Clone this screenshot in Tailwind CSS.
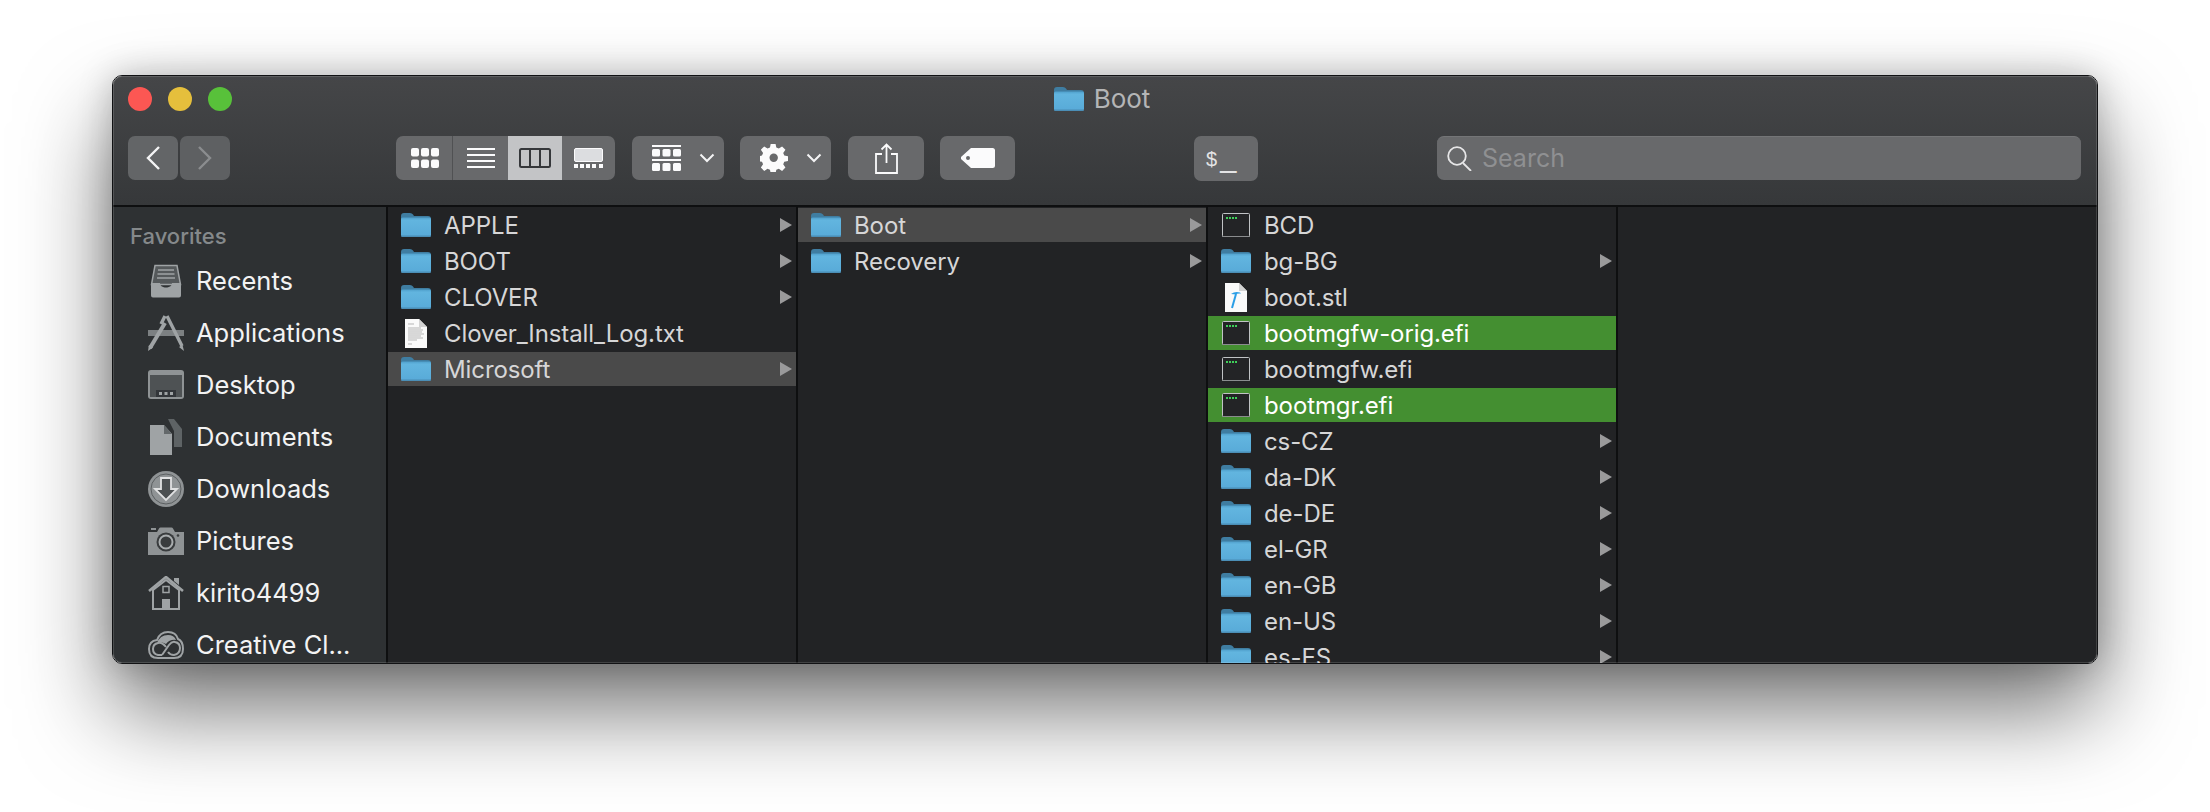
<!DOCTYPE html>
<html lang="en">
<head>
  <meta charset="UTF-8">
  <title>Boot</title>
  <script src="https://cdn.jsdelivr.net/npm/@tailwindcss/browser@4"></script>
</head>
<body class="bg-white w-[2210px] h-[812px] overflow-hidden font-['Inter',sans-serif]">

  <!-- Shared icons -->
  <svg class="absolute w-0 h-0">
    <defs>
      <linearGradient id="folderFill" x1="0" y1="0" x2="0" y2="1">
        <stop offset="0" stop-color="#4f9fcb"/>
        <stop offset="0.14" stop-color="#62b5df"/>
        <stop offset="1" stop-color="#58aad8"/>
      </linearGradient>
    </defs>
    <symbol id="folder" viewBox="0 0 30 24">
      <path d="M0 3q0-3 3-3h6q2 0 3 1.500l1 1.500h14q3 0 3 3v6H0z" fill="#3f7da1"/>
      <path d="M0 6q0-1.500 1.500-1.500h27q1.500 0 1.500 1.500v16q0 2-2 2H2q-2 0-2-2z" fill="url(#folderFill)"/>
      <path d="M0 22.500q0 1.500 2 1.500h26q2 0 2-1.500z" fill="#4b8eb6"/>
    </symbol>
    <symbol id="arrow" viewBox="0 0 12 14">
      <path d="M0 0l12 7-12 7z" fill="#9a9a9b"/>
    </symbol>
    <symbol id="term" viewBox="0 0 28 24">
      <rect x="0.500" y="0.500" width="27" height="23" rx="1" fill="#232426" stroke="#c0c3c5"/>
      <path d="M0 23.500h28" stroke="#8a8c8e"/>
      <path d="M4 5h2M7 5h2M10 5h2M13 5h2" stroke="#3fd05a" stroke-width="2"/>
    </symbol>
    <symbol id="chev" viewBox="0 0 16 10">
      <path d="M1.500 1.500l6.500 6.500 6.500-6.500" fill="none" stroke="#f4f4f5" stroke-width="2"/>
    </symbol>
  </svg>

  <div class="pt-[75px] pl-[112px]">
    <!-- Window -->
    <div class="relative w-[1986px] h-[589px] flex flex-col rounded-[10px] border border-[#111214] overflow-hidden shadow-[0_46px_90px_rgba(0,0,0,0.55),0_0_34px_rgba(0,0,0,0.22)] after:absolute after:inset-0 after:rounded-[9px] after:pointer-events-none after:shadow-[inset_0_0_0_1px_rgba(255,255,255,0.14)]">

      <!-- Toolbar -->
      <div class="h-[131px] shrink-0 border-b-2 border-[#0e0f10] bg-gradient-to-b from-[#454648] to-[#36383a]">
        <div class="h-[45px] grid grid-cols-[1fr_auto_1fr] items-center pl-[15px] pr-[21px]">
          <div class="flex gap-[16px]">
            <span class="w-[24px] h-[24px] rounded-full bg-[#fc5753]"></span>
            <span class="w-[24px] h-[24px] rounded-full bg-[#e5bf3c]"></span>
            <span class="w-[24px] h-[24px] rounded-full bg-[#58c13a]"></span>
          </div>
          <div class="flex items-center gap-[10px]">
            <svg class="w-[30px] h-[24px]"><use href="#folder"/></svg>
            <span class="text-[26px] text-[#b4b5b6]">Boot</span>
          </div>
          <div></div>
        </div>

        <div class="flex items-start pt-[15px] pl-[15px]">
          <!-- Back / forward -->
          <div class="w-[50px] h-[44px] rounded-[7px] bg-[#636567] flex items-center justify-center mr-[2px]">
            <svg class="w-[14px] h-[24px]" viewBox="0 0 14 24"><path d="M13 1L2 12l11 11" fill="none" stroke="#f4f4f5" stroke-width="2.400"/></svg>
          </div>
          <div class="w-[50px] h-[44px] rounded-[7px] bg-[#5e6062] flex items-center justify-center">
            <svg class="w-[14px] h-[24px]" viewBox="0 0 14 24"><path d="M1 1l11 11L1 23" fill="none" stroke="#8b8d8f" stroke-width="2.400"/></svg>
          </div>

          <!-- View switcher -->
          <div class="ml-[166px] w-[219px] h-[44px] rounded-[7px] bg-[#68696b] overflow-hidden flex">
            <div class="w-[57px] pl-[2px] border-r border-[#505153] flex items-center justify-center">
              <svg class="w-[28px] h-[20px]" viewBox="0 0 28 20" fill="#fbfbfc">
                <rect width="8" height="8.500" rx="2"/><rect x="10" width="8" height="8.500" rx="2"/><rect x="20" width="8" height="8.500" rx="2"/>
                <rect y="11.500" width="8" height="8.500" rx="2"/><rect x="10" y="11.500" width="8" height="8.500" rx="2"/><rect x="20" y="11.500" width="8" height="8.500" rx="2"/>
              </svg>
            </div>
            <div class="w-[55px] flex items-center justify-center">
              <svg class="w-[28px] h-[20px]" viewBox="0 0 28 20" fill="#fbfbfc">
                <rect width="28" height="2"/><rect y="6" width="28" height="2"/><rect y="12" width="28" height="2"/><rect y="18" width="28" height="2"/>
              </svg>
            </div>
            <div class="w-[54px] bg-[#c3c4c6] flex items-center justify-center">
              <svg class="w-[32px] h-[20px]" viewBox="0 0 32 20" fill="none" stroke="#35373a" stroke-width="2">
                <rect x="1" y="1" width="30" height="18" rx="1.500"/><path d="M11 1v18M21 1v18"/>
              </svg>
            </div>
            <div class="w-[53px] flex items-center justify-center">
              <svg class="w-[29px] h-[20px]" viewBox="0 0 29 20">
                <rect x="0.500" y="0.500" width="28" height="13" rx="1.500" fill="#dcdde0" stroke="#fbfbfc"/>
                <path d="M0 16h4v4H0zM6 16h4v4H6zM12 16h4v4h-4zM18 16h4v4h-4zM25 16h4v4h-4z" fill="#fbfbfc"/>
              </svg>
            </div>
          </div>

          <!-- Group by -->
          <div class="ml-[17px] w-[92px] h-[44px] rounded-[7px] bg-[#68696b] flex items-center pl-[20px]">
            <svg class="w-[29px] h-[26px]" viewBox="0 0 29 26" fill="#fbfbfc">
              <rect width="29" height="2"/><rect y="4" width="8" height="7.500" rx="1.500"/><rect x="10.500" y="4" width="8" height="7.500" rx="1.500"/><rect x="21" y="4" width="8" height="7.500" rx="1.500"/>
              <rect y="14" width="29" height="2"/><rect y="18" width="8" height="8" rx="1.500"/><rect x="10.500" y="18" width="8" height="8" rx="1.500"/><rect x="21" y="18" width="8" height="8" rx="1.500"/>
            </svg>
            <svg class="w-[16px] h-[10px] ml-[18px]"><use href="#chev"/></svg>
          </div>

          <!-- Action -->
          <div class="ml-[16px] w-[91px] h-[44px] rounded-[7px] bg-[#68696b] flex items-center pl-[20px]">
            <svg class="w-[28px] h-[28px]" viewBox="0 0 28 28">
              <path d="M11.500 0h5l.8 4 2.600 1.100 3.400-2.300 3.500 3.500-2.300 3.400 1.100 2.600 4 .8v5l-4 .8-1.100 2.600 2.300 3.400-3.500 3.500-3.400-2.300-2.600 1.100-.8 4h-5l-.8-4-2.600-1.100-3.400 2.300-3.500-3.500 2.300-3.400-1.100-2.600-4-.8v-5l4-.8 1.100-2.600-2.300-3.400 3.500-3.500 3.400 2.300 2.600-1.100z" transform="translate(-.3 -.3) scale(.96)" fill="#fbfbfc"/>
              <circle cx="13.700" cy="13.700" r="4.200" fill="#68696b"/>
            </svg>
            <svg class="w-[16px] h-[10px] ml-[18px]"><use href="#chev"/></svg>
          </div>

          <!-- Share -->
          <div class="ml-[17px] w-[76px] h-[44px] rounded-[7px] bg-[#68696b] flex items-center justify-center">
            <svg class="w-[23px] h-[31px]" viewBox="0 0 23 31" fill="none" stroke="#fbfbfc" stroke-width="1.800">
              <path d="M7 11H1v19h21V11h-6"/><path d="M11.500 20V1.500M6.500 6.500l5-5 5 5"/>
            </svg>
          </div>

          <!-- Tags -->
          <div class="ml-[16px] w-[75px] h-[44px] rounded-[7px] bg-[#68696b] flex items-center justify-center">
            <svg class="w-[34px] h-[20px]" viewBox="0 0 34 20">
              <path fill-rule="evenodd" d="M10 0h21.500q2.500 0 2.500 2.500v15q0 2.500-2.500 2.500H10L0 11V9zM7 8a2 2 0 1 0 0 4 2 2 0 0 0 0-4z" fill="#fbfbfc"/>
            </svg>
          </div>

          <!-- Terminal -->
          <div class="ml-[179px] w-[64px] h-[45px] rounded-[7px] bg-[#68696b] flex items-center pl-[12px] gap-[3px] font-['Liberation_Sans',sans-serif] text-[#e4e4e5]">
            <span class="text-[20px] font-light">$</span>
            <span class="text-[29px] leading-none font-light mb-[3px]">_</span>
          </div>

          <!-- Search -->
          <div class="ml-[179px] w-[644px] h-[44px] rounded-[7px] bg-[#68696b] border-t border-[#747577] flex items-center pl-[10px] gap-[10px]">
            <svg class="w-[25px] h-[25px]" viewBox="0 0 25 25" fill="none" stroke="#e6e6e7" stroke-width="1.800">
              <circle cx="10" cy="10" r="8.800"/><path d="M16 17l8 8"/>
            </svg>
            <span class="text-[25px] pt-[1px] text-[#8f9092]">Search</span>
          </div>
        </div>
      </div>

      <!-- Browser -->
      <div class="flex-1 min-h-0 flex">

        <!-- Sidebar -->
        <div class="w-[275px] shrink-0 bg-[#2e3133] border-r-2 border-[#0e0f10] text-[25.500px] text-[#f3f3f3]">
          <div class="h-[48px] flex items-center pt-[11px] pl-[17px] text-[22px] font-medium text-[#85898b]">Favorites</div>

          <div class="h-[52px] flex items-center pl-[35px] gap-[12px]">
            <svg class="w-[36px] h-[36px] shrink-0" viewBox="0 0 36 36">
              <path d="M7 2.500h22l3.500 19h-29z" fill="#55595b" stroke="#9fa3a5" stroke-width="1.500"/>
              <path d="M10 7h16M9.500 11h17M9 15h18" stroke="#9fa3a5" stroke-width="1.600"/>
              <path d="M3 20h9c0 3 3 4.500 6 4.500s6-1.500 6-4.500h9v12.500q0 2-2 2H5q-2 0-2-2z" fill="#9fa3a5"/>
            </svg>
            <span>Recents</span>
          </div>

          <div class="h-[52px] flex items-center pl-[35px] gap-[12px]">
            <svg class="w-[36px] h-[36px] shrink-0" viewBox="0 0 36 36">
              <path d="M0 15h36v6H0z" fill="#7c8082"/>
              <path d="M17 1l-4 8M19 1l15 30" stroke="#9fa3a5" stroke-width="3.400" fill="none"/>
              <path d="M17 8L2 33" stroke="#9fa3a5" stroke-width="4" fill="none"/>
              <path d="M0 36l1-6 4 2.500z" fill="#9fa3a5"/>
              <path d="M36 36l-5-4 3.500-2z" fill="#9fa3a5"/>
            </svg>
            <span>Applications</span>
          </div>

          <div class="h-[52px] flex items-center pl-[35px] gap-[12px]">
            <svg class="w-[36px] h-[30px] shrink-0" viewBox="0 0 36 30">
              <rect width="36" height="29" rx="3" fill="#8f9395"/>
              <rect x="2" y="5" width="32" height="22" fill="#4e5254"/>
              <path d="M8 20h20v7H8z" fill="#33363a"/>
              <path d="M11 22h3v3h-3zM16.500 22h3v3h-3zM22 22h3v3h-3z" fill="#9fa3a5"/>
            </svg>
            <span>Desktop</span>
          </div>

          <div class="h-[52px] flex items-center pl-[35px] gap-[12px]">
            <svg class="w-[36px] h-[36px] shrink-0" viewBox="0 0 36 36">
              <path d="M20 0h6l8 10v18h-8V12z" fill="#5e6365"/>
              <path d="M2 6h14l8 9v21H2z" fill="#9fa3a5"/>
              <path d="M16 6v9h8z" fill="#63686a"/>
            </svg>
            <span>Documents</span>
          </div>

          <div class="h-[52px] flex items-center pl-[35px] gap-[12px]">
            <svg class="w-[36px] h-[36px] shrink-0" viewBox="0 0 36 36">
              <circle cx="18" cy="18" r="18" fill="#8f9395"/>
              <circle cx="18" cy="18" r="15" fill="none" stroke="#5b5f61" stroke-width="1"/>
              <path d="M13 7h10v11h6L18 29 7 18h6z" fill="#4c5052" stroke="#e0e1e2" stroke-width="1.800"/>
            </svg>
            <span>Downloads</span>
          </div>

          <div class="h-[52px] flex items-center pl-[35px] gap-[12px]">
            <svg class="w-[36px] h-[28px] shrink-0" viewBox="0 0 36 28">
              <path d="M0 5h9l2-3.500q.5-1 1.500-1h11q1 0 1.500 1L27 5h9v23H0z" fill="#8f9395"/>
              <path d="M3 1h5v2H3z" fill="#8f9395"/>
              <circle cx="18" cy="15" r="9.500" fill="#393c3e"/>
              <circle cx="18" cy="15" r="6.500" fill="none" stroke="#a9adaf" stroke-width="2"/>
              <circle cx="30" cy="8.500" r="1.300" fill="#393c3e"/>
            </svg>
            <span>Pictures</span>
          </div>

          <div class="h-[52px] flex items-center pl-[35px] gap-[12px]">
            <svg class="w-[36px] h-[34px] shrink-0" viewBox="0 0 36 34">
              <path d="M26 2h5v7l-5-4z" fill="#9fa3a5"/>
              <path d="M1 15L18 1l17 14" fill="none" stroke="#9fa3a5" stroke-width="2.600"/>
              <path d="M5 14v19h26V14L18 4z" fill="none" stroke="#9fa3a5" stroke-width="2"/>
              <path d="M14 23h8v10h-8z" fill="#9fa3a5"/>
              <path d="M15 10.500h6v6h-6z" fill="none" stroke="#9fa3a5" stroke-width="1.500"/>
            </svg>
            <span>kirito4499</span>
          </div>

          <div class="h-[52px] flex items-center pl-[35px] gap-[12px]">
            <svg class="w-[36px] h-[28px] shrink-0" viewBox="0 0 36 28" fill="none" stroke="#9fa3a5" stroke-width="2">
              <path d="M10 27Q1 27 1 18Q1 10 9 9Q12 1 20 1Q28 1 30 8Q35 10 35 18Q35 27 26 27z"/>
              <path d="M9 12Q12 4 20 4Q26 4 28 9Q22 8 18 13Q13 10 9 12z" fill="#9fa3a5" stroke="none"/>
              <path d="M14 24L21 14Q24 10 27 11Q32 12 32 17Q32 23 26 24Q22 24 20 21"/>
              <path d="M18 16Q14 11 10 12Q5 13 5 18Q5 23 10 24L14 24"/>
            </svg>
            <span>Creative Cl...</span>
          </div>
        </div>

        <!-- Column 1 -->
        <div class="w-[410px] shrink-0 bg-[#222325] border-r-2 border-[#0e0f10] pt-[1px] text-[24px] tracking-[-0.1px] text-[#d6d6d7] [&_span]:pt-[2px]">
          <div class="h-[34px] mb-[2px] flex items-center pl-[13px] pr-[4px]">
            <svg class="w-[30px] h-[24px]"><use href="#folder"/></svg><span class="ml-[13px] flex-1">APPLE</span><svg class="w-[12px] h-[14px]"><use href="#arrow"/></svg>
          </div>
          <div class="h-[34px] mb-[2px] flex items-center pl-[13px] pr-[4px]">
            <svg class="w-[30px] h-[24px]"><use href="#folder"/></svg><span class="ml-[13px] flex-1">BOOT</span><svg class="w-[12px] h-[14px]"><use href="#arrow"/></svg>
          </div>
          <div class="h-[34px] mb-[2px] flex items-center pl-[13px] pr-[4px]">
            <svg class="w-[30px] h-[24px]"><use href="#folder"/></svg><span class="ml-[13px] flex-1">CLOVER</span><svg class="w-[12px] h-[14px]"><use href="#arrow"/></svg>
          </div>
          <div class="h-[34px] mb-[2px] flex items-center pl-[17px] pr-[4px]">
            <svg class="w-[22px] h-[29px]" viewBox="0 0 22 29">
              <path d="M0 0h14l8 8v21H0z" fill="#fafafa"/>
              <path d="M14 0v8h8z" fill="#d3d3d3"/>
              <path d="M3 5h6M3 9h13M3 11h15M3 13h14M3 15h16M3 17h13M3 19h15M3 21h9M3 25h4" stroke="#b5b5b5" stroke-width="1"/>
            </svg>
            <span class="ml-[17px] flex-1">Clover_Install_Log.txt</span>
          </div>
          <div class="h-[34px] mb-[2px] flex items-center pl-[13px] pr-[4px] bg-[#4a4a4a]">
            <svg class="w-[30px] h-[24px]"><use href="#folder"/></svg><span class="ml-[13px] flex-1">Microsoft</span><svg class="w-[12px] h-[14px]"><use href="#arrow"/></svg>
          </div>
        </div>

        <!-- Column 2 -->
        <div class="w-[410px] shrink-0 bg-[#222325] border-r-2 border-[#0e0f10] pt-[1px] text-[24px] tracking-[-0.1px] text-[#d6d6d7] [&_span]:pt-[2px]">
          <div class="h-[34px] mb-[2px] flex items-center pl-[13px] pr-[4px] bg-[#4a4a4a]">
            <svg class="w-[30px] h-[24px]"><use href="#folder"/></svg><span class="ml-[13px] flex-1">Boot</span><svg class="w-[12px] h-[14px]"><use href="#arrow"/></svg>
          </div>
          <div class="h-[34px] mb-[2px] flex items-center pl-[13px] pr-[4px]">
            <svg class="w-[30px] h-[24px]"><use href="#folder"/></svg><span class="ml-[13px] flex-1">Recovery</span><svg class="w-[12px] h-[14px]"><use href="#arrow"/></svg>
          </div>
        </div>

        <!-- Column 3 -->
        <div class="w-[410px] shrink-0 bg-[#222325] border-r-2 border-[#0e0f10] pt-[1px] text-[24px] tracking-[-0.1px] text-[#d6d6d7] [&_span]:pt-[2px]">
          <div class="h-[34px] mb-[2px] flex items-center pl-[14px]">
            <svg class="w-[28px] h-[24px]"><use href="#term"/></svg><span class="ml-[14px]">BCD</span>
          </div>
          <div class="h-[34px] mb-[2px] flex items-center pl-[13px] pr-[4px]">
            <svg class="w-[30px] h-[24px]"><use href="#folder"/></svg><span class="ml-[13px] flex-1">bg-BG</span><svg class="w-[12px] h-[14px]"><use href="#arrow"/></svg>
          </div>
          <div class="h-[34px] mb-[2px] flex items-center pl-[17px]">
            <svg class="w-[22px] h-[29px]" viewBox="0 0 22 29">
              <path d="M0 0h14l8 8v21H0z" fill="#fafafa"/>
              <path d="M14 0v8h8z" fill="#d3d3d3"/>
              <path d="M7 25L11 11" stroke="#2a9ee6" stroke-width="2"/>
              <path d="M6 11q4-3 9-1.500l1 1q-4-.5-5 1z" fill="#2a9ee6"/>
            </svg>
            <span class="ml-[17px]">boot.stl</span>
          </div>
          <div class="h-[34px] mb-[2px] flex items-center pl-[14px] bg-[#448f31] text-white">
            <svg class="w-[28px] h-[24px]"><use href="#term"/></svg><span class="ml-[14px]">bootmgfw-orig.efi</span>
          </div>
          <div class="h-[34px] mb-[2px] flex items-center pl-[14px]">
            <svg class="w-[28px] h-[24px]"><use href="#term"/></svg><span class="ml-[14px]">bootmgfw.efi</span>
          </div>
          <div class="h-[34px] mb-[2px] flex items-center pl-[14px] bg-[#448f31] text-white">
            <svg class="w-[28px] h-[24px]"><use href="#term"/></svg><span class="ml-[14px]">bootmgr.efi</span>
          </div>
          <div class="h-[34px] mb-[2px] flex items-center pl-[13px] pr-[4px]">
            <svg class="w-[30px] h-[24px]"><use href="#folder"/></svg><span class="ml-[13px] flex-1">cs-CZ</span><svg class="w-[12px] h-[14px]"><use href="#arrow"/></svg>
          </div>
          <div class="h-[34px] mb-[2px] flex items-center pl-[13px] pr-[4px]">
            <svg class="w-[30px] h-[24px]"><use href="#folder"/></svg><span class="ml-[13px] flex-1">da-DK</span><svg class="w-[12px] h-[14px]"><use href="#arrow"/></svg>
          </div>
          <div class="h-[34px] mb-[2px] flex items-center pl-[13px] pr-[4px]">
            <svg class="w-[30px] h-[24px]"><use href="#folder"/></svg><span class="ml-[13px] flex-1">de-DE</span><svg class="w-[12px] h-[14px]"><use href="#arrow"/></svg>
          </div>
          <div class="h-[34px] mb-[2px] flex items-center pl-[13px] pr-[4px]">
            <svg class="w-[30px] h-[24px]"><use href="#folder"/></svg><span class="ml-[13px] flex-1">el-GR</span><svg class="w-[12px] h-[14px]"><use href="#arrow"/></svg>
          </div>
          <div class="h-[34px] mb-[2px] flex items-center pl-[13px] pr-[4px]">
            <svg class="w-[30px] h-[24px]"><use href="#folder"/></svg><span class="ml-[13px] flex-1">en-GB</span><svg class="w-[12px] h-[14px]"><use href="#arrow"/></svg>
          </div>
          <div class="h-[34px] mb-[2px] flex items-center pl-[13px] pr-[4px]">
            <svg class="w-[30px] h-[24px]"><use href="#folder"/></svg><span class="ml-[13px] flex-1">en-US</span><svg class="w-[12px] h-[14px]"><use href="#arrow"/></svg>
          </div>
          <div class="h-[34px] mb-[2px] flex items-center pl-[13px] pr-[4px]">
            <svg class="w-[30px] h-[24px]"><use href="#folder"/></svg><span class="ml-[13px] flex-1">es-ES</span><svg class="w-[12px] h-[14px]"><use href="#arrow"/></svg>
          </div>
        </div>

        <!-- Empty column -->
        <div class="flex-1 bg-[#222325]"></div>
      </div>
    </div>
  </div>

</body>
</html>
